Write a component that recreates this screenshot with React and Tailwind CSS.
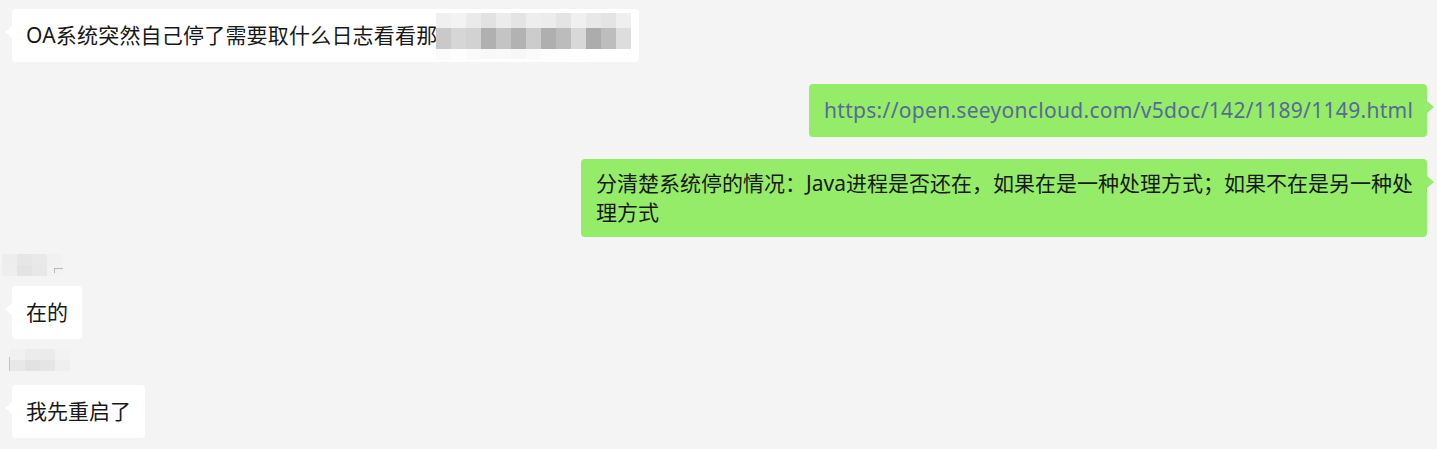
import React from "react";
import clsx from "clsx";

const font = "font-['Noto_Sans','Noto_Sans_CJK_SC',sans-serif]";

// mosaic colours of the hidden part of the first message
const blurTop = ["bg-[#f0f0f0]", "bg-[#f3f3f3]", "bg-[#eaeaea]", "bg-[#e2e2e2]", "bg-[#ececec]", "bg-[#e4e4e4]", "bg-[#eeeeee]", "bg-[#ececec]", "bg-[#e4e4e4]", "bg-[#f0f0f0]", "bg-[#e8e8e8]", "bg-[#e4e4e4]", "bg-[#efefef]"];
const blurMid = ["bg-[#c9c9c9]", "bg-[#d6d6d6]", "bg-[#d2d2d2]", "bg-[#b0b0b0]", "bg-[#c4c4c4]", "bg-[#b2b2b2]", "bg-[#cccccc]", "bg-[#afafaf]", "bg-[#bcbcbc]", "bg-[#d8d8d8]", "bg-[#acacac]", "bg-[#bdbdbd]", "bg-[#dddddd]"];
const blurLow = ["bg-[#fbfbfb]", "bg-[#fdfdfd]", "bg-[#fafafa]", "bg-[#f8f8f8]", "bg-[#f9f9f9]", "bg-[#f7f7f7]", "bg-[#fafafa]", "bg-[#fcfcfc]", "bg-[#fdfdfd]", "bg-[#fefefe]", "bg-white", "bg-white", "bg-white"];

const nameBlur1 = [
  ["bg-[#ededed]", "bg-[#e6e6e6]", "bg-[#e9e9e9]", "bg-[#f1f1f1]"],
  ["bg-[#eeeeee]", "bg-[#e3e3e3]", "bg-[#e8e8e8]", "bg-[#f2f2f2]"],
];
const nameBlur2 = [
  ["bg-[#f1f1f1]", "bg-[#ececec]", "bg-[#ebebeb]", "bg-[#f2f2f2]"],
  ["bg-[#e8e8e8]", "bg-[#e2e2e2]", "bg-[#e5e5e5]", "bg-[#efefef]"],
];

function Bubble({ mine, className, children }) {
  return (
    <div
      className={clsx(
        "relative rounded-[4px] px-[14px] text-[21px] leading-[29px] text-[#191919]",
        mine ? "bg-[#95ec69]" : "bg-white",
        className
      )}
    >
      <span
        className={clsx(
          "absolute top-[17px] h-0 w-0 border-y-[6px] border-y-transparent",
          mine
            ? "left-full border-l-[7px] border-l-[#95ec69]"
            : "right-full border-r-[7px] border-r-white"
        )}
      />
      {children}
    </div>
  );
}

function NameBlur({ rows, mark }) {
  return (
    <div className="relative flex h-[30px] w-[72px] flex-col justify-center">
      {rows.map((row, i) => (
        <div key={i} className="flex">
          {row.map((c, j) => (
            <div key={j} className={clsx("h-[11px] w-[15px]", c)} />
          ))}
        </div>
      ))}
      {mark}
    </div>
  );
}

export default function App() {
  return (
    <div className={clsx("flex h-[449px] w-full flex-col overflow-hidden bg-[#f4f4f4] pt-[9px]", font)}>
      <div className="flex pl-[12px]">
        <Bubble className="w-[627px] py-[12px] whitespace-nowrap">
          <span className="tracking-[0.2px]">OA系统突然自己停了需要取什么日志看看那</span>
          <span className="relative inline-block h-[29px] w-[180px] align-top">
            <span className="absolute -left-[1px] -top-[8px] flex flex-col">
              {[blurTop, blurMid, blurLow].map((row, i) => (
                <span key={i} className="flex">
                  {row.map((c, j) => (
                    <span
                      key={j}
                      className={clsx(
                        "block w-[15px]",
                        i === 0 ? "h-[15px]" : i === 1 ? "h-[21px]" : "h-[10px]",
                        c
                      )}
                    />
                  ))}
                </span>
              ))}
            </span>
          </span>
        </Bubble>
      </div>

      <div className="mt-[22px] flex justify-end pr-[10px]">
        <Bubble mine className="w-[618px] py-[12px] px-[15px] whitespace-nowrap">
          <span className="tracking-[0.3px] text-[#576b95]">https://open.seeyoncloud.com/v5doc/142/1189/1149.html</span>
        </Bubble>
      </div>

      <div className="mt-[22px] flex justify-end pr-[10px]">
        <Bubble mine className="w-[846px] py-[10px] px-[15px] whitespace-nowrap">
          分清楚系统停的情况：Java进程是否还在，如果在是一种处理方式；如果不在是另一种处
          <br />
          理方式
        </Bubble>
      </div>

      <div className="mt-[13px] pl-[2px]">
        <NameBlur
          rows={nameBlur1}
          mark={<span className="absolute left-[52px] top-[18px] h-[5px] w-[9px] border-l border-t border-[#b8b8b8]" />}
        />
      </div>
      <div className="mt-[6px] flex pl-[12px]">
        <Bubble className="py-[12px]">在的</Bubble>
      </div>

      <div className="mt-[6px] pl-[10px]">
        <NameBlur
          rows={nameBlur2}
          mark={<span className="absolute -left-[1px] top-[12px] h-[14px] w-[3px] border-l border-[#c4c4c4]" />}
        />
      </div>
      <div className="mt-[10px] flex pl-[12px]">
        <Bubble className="py-[12px]">我先重启了</Bubble>
      </div>
    </div>
  );
}
